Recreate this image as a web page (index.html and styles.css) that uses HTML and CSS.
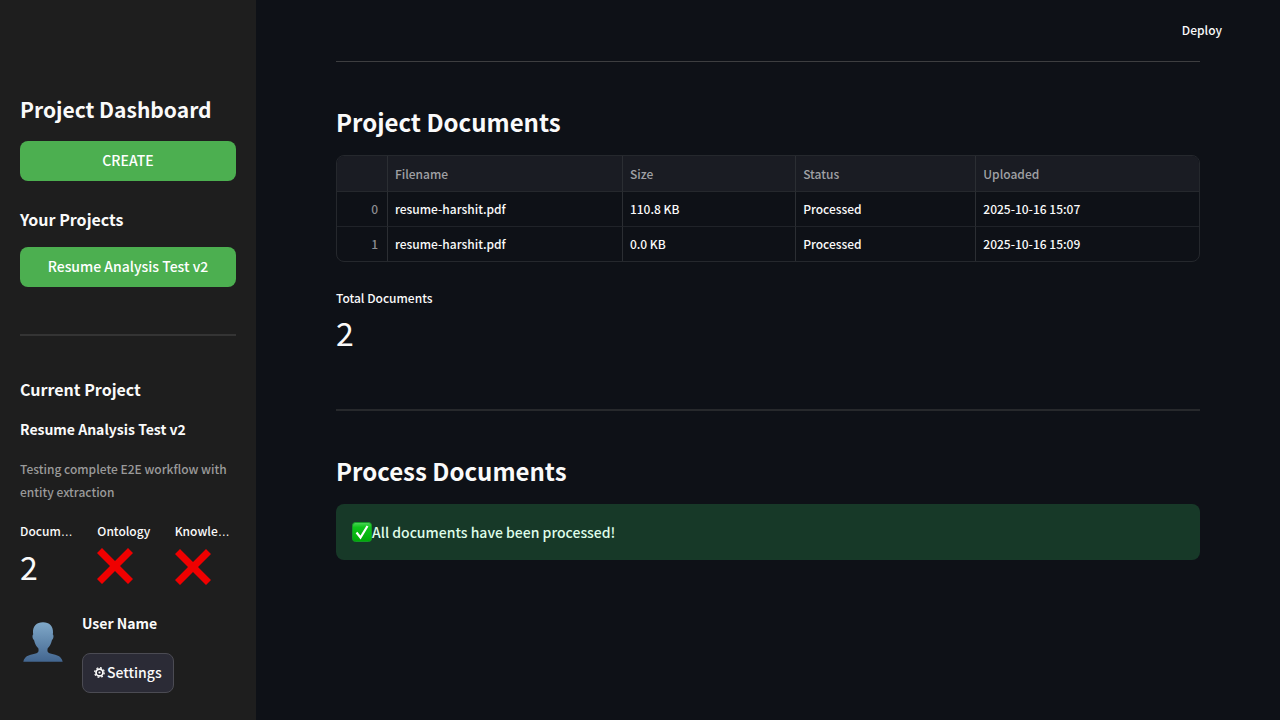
FILE: index.html
```html
<!DOCTYPE html>
<html lang="en">
<head>
<meta charset="utf-8">
<meta name="viewport" content="width=device-width, initial-scale=1">
<title>Project Dashboard</title>
<link rel="stylesheet" href="styles.css">
</head>
<body>
<div class="app">
  <aside class="sidebar">
    <h1 class="sidebar-title">Project Dashboard</h1>
    <button class="btn btn-primary" type="button">CREATE</button>
    <h2 class="sidebar-heading projects-heading">Your Projects</h2>
    <button class="btn btn-primary" type="button">Resume Analysis Test v2</button>
    <hr class="divider sidebar-divider">
    <h2 class="sidebar-heading">Current Project</h2>
    <p class="project-name">Resume Analysis Test v2</p>
    <p class="project-description">Testing complete E2E workflow with entity extraction</p>
    <div class="metrics">
      <div class="metric">
        <p class="metric-label">Docum<span class="ellipsis">…</span></p>
        <p class="metric-value">2</p>
      </div>
      <div class="metric">
        <p class="metric-label">Ontology</p>
        <p class="metric-value"><svg class="cross" viewBox="0 0 36 36" role="img" aria-label="No"><path d="M5 0 18 13 31 0 36 5 23 18 36 31 31 36 18 23 5 36 0 31 13 18 0 5Z"/></svg></p>
      </div>
      <div class="metric">
        <p class="metric-label">Knowle<span class="ellipsis">…</span></p>
        <p class="metric-value"><svg class="cross" viewBox="0 0 36 36" role="img" aria-label="No"><path d="M5 0 18 13 31 0 36 5 23 18 36 31 31 36 18 23 5 36 0 31 13 18 0 5Z"/></svg></p>
      </div>
    </div>
    <div class="user">
      <svg class="avatar" viewBox="0 0 40 40" aria-hidden="true">
        <defs><linearGradient id="avatarFill" x1="0" y1="0" x2="0" y2="1"><stop offset="0" stop-color="#80a9c9"/><stop offset="1" stop-color="#436690"/></linearGradient></defs>
        <path fill="url(#avatarFill)" d="M20 .2C13.500 .2 9.800 4.200 10 10.500L10.200 12.500C9 13 9.400 17 11 18C12 22 13.300 24.500 15.300 26.200C16 29 15.500 30.300 13.500 31.200C9 33 1.500 32.500 .3 39.700H39.700C38.500 32.500 31 33 26.500 31.200C24.500 30.300 24 29 24.700 26.200C26.700 24.500 28 22 29 18C30.600 17 31 13 29.800 12.500L30 10.500C30.200 4.200 26.500 .2 20 .2Z"/>
      </svg>
      <div class="user-info">
        <p class="project-name user-name">User Name</p>
        <button class="btn btn-settings" type="button">
          <svg class="gear" viewBox="0 0 12 12" aria-hidden="true"><circle cx="6" cy="6" r="3.800" fill="none" stroke="#fafafa" stroke-width="1.900"/><circle cx="6" cy="6" r="5.200" fill="none" stroke="#fafafa" stroke-width="1.400" stroke-dasharray="2.040 2.040"/><circle cx="6" cy="6" r="1.200" fill="#fafafa"/></svg>
          Settings
        </button>
      </div>
    </div>
  </aside>
  <main class="main">
    <header class="toolbar"><button class="deploy" type="button">Deploy</button></header>
    <div class="content">
      <hr class="divider top-divider">
      <h2 class="section-title">Project Documents</h2>
      <div class="table-frame">
        <table class="documents">
          <colgroup><col class="col-index"><col class="col-name"><col class="col-size"><col class="col-status"><col class="col-date"></colgroup>
          <thead><tr><th></th><th>Filename</th><th>Size</th><th>Status</th><th>Uploaded</th></tr></thead>
          <tbody>
            <tr><td class="index">0</td><td>resume-harshit.pdf</td><td>110.8 KB</td><td>Processed</td><td>2025-10-16 15:07</td></tr>
            <tr><td class="index">1</td><td>resume-harshit.pdf</td><td>0.0 KB</td><td>Processed</td><td>2025-10-16 15:09</td></tr>
          </tbody>
        </table>
      </div>
      <p class="metric-label">Total Documents</p>
      <p class="metric-value">2</p>
      <hr class="divider main-divider">
      <h2 class="section-title">Process Documents</h2>
      <div class="alert" role="status">
        <svg class="check" viewBox="0 0 20 20" aria-hidden="true">
          <defs><linearGradient id="checkFill" x1="0" y1="0" x2="0" y2="1"><stop offset="0" stop-color="#4fd45a"/><stop offset=".25" stop-color="#0fc51b"/><stop offset="1" stop-color="#00a808"/></linearGradient></defs>
          <rect x=".5" y=".5" width="19" height="19" rx="3" fill="url(#checkFill)" stroke="#139a25"/>
          <path d="M4.500 10.500 8.500 15.500 15.500 4" fill="none" stroke="#fff" stroke-width="2.200"/>
        </svg><span>All documents have been processed!</span>
      </div>
    </div>
  </main>
</div>
</body>
</html>
```
FILE: styles.css
```css
*, *::before, *::after { box-sizing: border-box; }

body {
  margin: 0;
  background: #0e1117;
  color: #fafafa;
  font: 500 14px/24px "Noto Sans CJK SC", "Noto Sans", sans-serif;
}

h1, h2, p { margin: 0; }
button { font: inherit; color: inherit; cursor: pointer; }
svg { display: block; flex: none; }

.app { display: flex; min-height: 100vh; }

.sidebar {
  display: flex;
  flex-direction: column;
  flex: 0 0 256px;
  padding: 95px 20px 28px;
  background: #1e1e1e;
}

.sidebar-title { margin-bottom: 18px; font-size: 21px; font-weight: 700; line-height: 28px; }
.sidebar-heading { font-size: 16px; font-weight: 700; line-height: 20px; }
.projects-heading { margin: 28px 0 18px; }

.btn { height: 40px; padding: 0 11px 2px; border: 0; border-radius: 8px; }
.btn-primary { background: #4caf50; color: #fff; }

.divider { width: 100%; height: 2px; margin: 0; border: 0; background: #343434; }
.sidebar-divider { margin: 47px 0 43px; }

.project-name { margin: 18px 0 16px; font-weight: 700; }
.project-description { margin-bottom: 18px; color: #9a9a9a; font-size: 12px; line-height: 23px; }

.metrics { display: grid; grid-template-columns: repeat(3, minmax(0, 1fr)); gap: 16px; }
.metric-label { font-size: 12px; line-height: 20px; white-space: nowrap; }
.metric-value { padding-bottom: 4px; font-size: 32px; line-height: 48px; font-weight: 400; }
.ellipsis { font-family: "Liberation Sans", sans-serif; }
.cross { width: 36px; height: 36px; margin: 7px 0 5px; fill: #f00000; }

.user { display: flex; gap: 16px; margin-top: 17px; }
.avatar { width: 40px; height: 40px; margin: 11px 3px 0; }
.user-name { margin: 0 0 18px; }
.btn-settings {
  display: flex;
  align-items: center;
  gap: 2px;
  border: 1px solid #4b4b53;
  background: #2b2b36;
}
.gear { width: 11px; height: 11px; }

.main { flex: 1; min-width: 0; }
.toolbar { display: flex; justify-content: flex-end; height: 61px; padding: 20px 58px 0; }
.deploy { padding: 0; border: 0; background: none; font-size: 12px; line-height: 20px; height: 20px; }
.content { padding: 0 80px 32px; }
.top-divider { height: 1px; margin-bottom: 43px; background: #3d3e40; }
.section-title { margin-bottom: 16px; font-size: 24px; font-weight: 700; line-height: 34px; }

.table-frame { margin-bottom: 26px; overflow: hidden; border: 1px solid #25282d; border-radius: 8px; }
.documents { width: 100%; border-collapse: separate; border-spacing: 0; table-layout: fixed; font-size: 12px; line-height: 20px; }
.documents th, .documents td { height: 35px; padding: 0 7px; border-right: 1px solid #2b2e33; border-bottom: 1px solid #202329; text-align: left; }
.documents th { height: 36px; background: #1a1c23; color: #a0a1a5; font-weight: 500; border-bottom-color: #25282d; }
.documents th:last-child, .documents td:last-child { border-right: 0; }
.documents tr:last-child td { height: 34px; border-bottom: 0; }
.documents .index { padding-right: 9px; color: #8c8d91; text-align: right; }
.col-index { width: 51px; }
.col-name { width: 27.25%; }
.col-size { width: 20.1%; }
.col-status { width: 20.9%; }

.main-divider { margin: 49px 0 43px; background: #27292c; }

.alert {
  display: flex;
  align-items: center;
  padding: 16px;
  border-radius: 8px;
  background: #173928;
  color: #dffde9;
}
.check { width: 20px; height: 20px; }
```
